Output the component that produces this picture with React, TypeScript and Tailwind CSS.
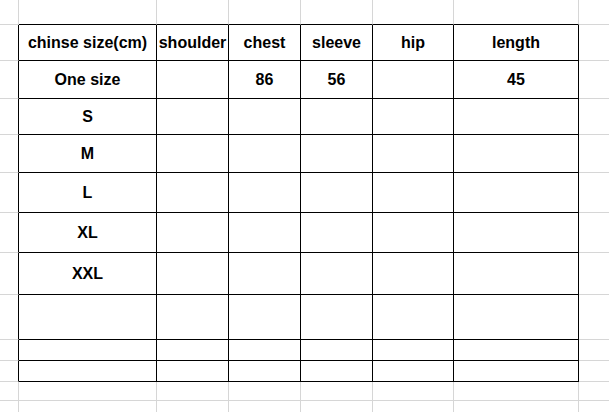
import React from 'react'

const ROWS: string[][] = [
  ['chinse size(cm)', 'shoulder', 'chest', 'sleeve', 'hip', 'length'],
  ['One size', '', '86', '56', '', '45'],
  ['S', '', '', '', '', ''],
  ['M', '', '', '', '', ''],
  ['L', '', '', '', '', ''],
  ['XL', '', '', '', '', ''],
  ['XXL', '', '', '', '', ''],
  ['', '', '', '', '', ''],
  ['', '', '', '', '', ''],
  ['', '', '', '', '', ''],
]

// sheet rows: 0 = blank row above, 1..10 = size table, 11..12 = blank rows below
const TOTAL_ROWS = 13
const TOTAL_COLS = 8

function inTable(r: number, c: number) {
  return r >= 1 && r <= 10 && c >= 1 && c <= 6
}

function cellClass(r: number, c: number) {
  const classes = ['flex items-center justify-center whitespace-nowrap']

  // right edge
  if (inTable(r, c) || (c === 0 && r >= 1 && r <= 10)) {
    classes.push('border-r border-r-black')
  } else if (c < TOTAL_COLS - 1) {
    classes.push('border-r border-r-[#d6d6d6]')
  }

  // bottom edge
  if (inTable(r, c) || (r === 0 && c >= 1 && c <= 6)) {
    classes.push('border-b border-b-black')
  } else if (r < TOTAL_ROWS - 1) {
    classes.push('border-b border-b-[#d6d6d6]')
  }

  return classes.join(' ')
}

export default function App() {
  const cells: React.ReactNode[] = []
  for (let r = 0; r < TOTAL_ROWS; r++) {
    for (let c = 0; c < TOTAL_COLS; c++) {
      const text = inTable(r, c) ? ROWS[r - 1][c - 1] : ''
      cells.push(
        <div key={`${r}-${c}`} className={cellClass(r, c)}>
          {text}
        </div>
      )
    }
  }

  return (
    <div className="w-[609px] h-[412px] overflow-hidden bg-white">
      <div className="grid grid-cols-[19px_138px_72px_72px_72px_81px_125px_30px] grid-rows-[25px_36px_38px_36px_38px_40px_40px_42px_45px_21px_21px_19px_20px] font-['Liberation_Sans',Arial,sans-serif] text-[16px] font-bold leading-none text-black">
        {cells}
      </div>
    </div>
  )
}
